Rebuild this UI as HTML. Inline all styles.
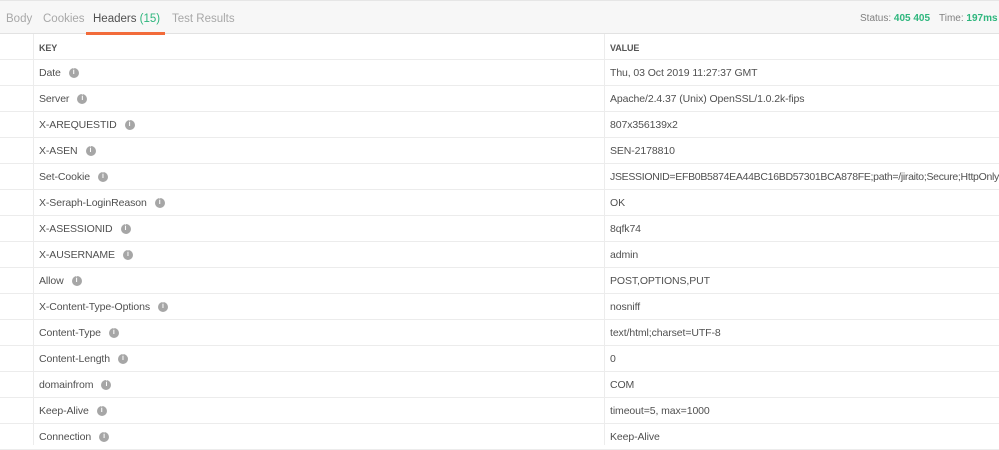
<!DOCTYPE html>
<html><head><style>
body{margin:0;width:999px;height:445px;overflow:hidden;background:#fff;font-family:"Liberation Sans",sans-serif;font-size:10.5px;color:#505050}
.top{position:absolute;left:0;top:0;width:999px;height:34px;background:#f7f7f7;border-top:1px solid #e6e6e6;border-bottom:1px solid #e2e2e2;box-sizing:border-box}
.tab{position:absolute;top:12px;font-size:11.5px;color:#a8a8a8}
.ul{position:absolute;left:86px;top:31px;width:79px;height:3px;background:#f26b3a}
.st{position:absolute;top:12px;font-size:10px;color:#808080}
.g{color:#2eb67d;font-weight:bold}
.row{position:absolute;left:0;width:999px;height:26px;border-bottom:1px solid #ececec;box-sizing:border-box;white-space:nowrap}
.row .k{position:absolute;left:39px;top:7px;letter-spacing:-0.1px}
.row .v{position:absolute;left:610px;top:7px;letter-spacing:-0.1px}
.i{display:inline-block;width:10px;height:10px;border-radius:50%;background:#a6a6a6;color:#fff;font-size:7px;text-align:center;line-height:10px;font-weight:bold;margin-left:8px;vertical-align:top;position:relative;top:1px;letter-spacing:0}
.vl{position:absolute;top:34px;width:1px;height:411px;background:#ececec}
</style></head><body>
<div class="top">
<span class="tab" style="left:6px">Body</span>
<span class="tab" style="left:43px">Cookies</span>
<span class="tab" style="left:93px;color:#505050">Headers <span style="color:#2eb67d">(15)</span></span>
<span class="tab" style="left:172px">Test Results</span>
<div class="ul"></div>
<span class="st" style="left:860px">Status: <span class="g">405 405</span></span>
<span class="st" style="left:939px">Time: <span class="g">197ms</span></span>
</div>
<div class="row" style="top:34px"><span class="k" style="font-size:9px;font-weight:bold;top:9px;color:#555">KEY</span><span class="v" style="font-size:9px;font-weight:bold;top:9px;color:#555">VALUE</span></div>
<div class="row" style="top:60px"><span class="k">Date<span class="i">i</span></span><span class="v">Thu, 03 Oct 2019 11:27:37 GMT</span></div>
<div class="row" style="top:86px"><span class="k">Server<span class="i">i</span></span><span class="v">Apache/2.4.37 (Unix) OpenSSL/1.0.2k-fips</span></div>
<div class="row" style="top:112px"><span class="k">X-AREQUESTID<span class="i">i</span></span><span class="v">807x356139x2</span></div>
<div class="row" style="top:138px"><span class="k">X-ASEN<span class="i">i</span></span><span class="v">SEN-2178810</span></div>
<div class="row" style="top:164px"><span class="k">Set-Cookie<span class="i">i</span></span><span class="v" style="letter-spacing:-0.3px">JSESSIONID=EFB0B5874EA44BC16BD57301BCA878FE;path=/jiraito;Secure;HttpOnly</span></div>
<div class="row" style="top:190px"><span class="k">X-Seraph-LoginReason<span class="i">i</span></span><span class="v">OK</span></div>
<div class="row" style="top:216px"><span class="k">X-ASESSIONID<span class="i">i</span></span><span class="v">8qfk74</span></div>
<div class="row" style="top:242px"><span class="k">X-AUSERNAME<span class="i">i</span></span><span class="v">admin</span></div>
<div class="row" style="top:268px"><span class="k">Allow<span class="i">i</span></span><span class="v">POST,OPTIONS,PUT</span></div>
<div class="row" style="top:294px"><span class="k">X-Content-Type-Options<span class="i">i</span></span><span class="v">nosniff</span></div>
<div class="row" style="top:320px"><span class="k">Content-Type<span class="i">i</span></span><span class="v">text/html;charset=UTF-8</span></div>
<div class="row" style="top:346px"><span class="k">Content-Length<span class="i">i</span></span><span class="v">0</span></div>
<div class="row" style="top:372px"><span class="k">domainfrom<span class="i">i</span></span><span class="v">COM</span></div>
<div class="row" style="top:398px"><span class="k">Keep-Alive<span class="i">i</span></span><span class="v">timeout=5, max=1000</span></div>
<div class="row" style="top:424px"><span class="k">Connection<span class="i">i</span></span><span class="v">Keep-Alive</span></div>
<div class="vl" style="left:33px"></div>
<div class="vl" style="left:604px"></div>
</body></html>
